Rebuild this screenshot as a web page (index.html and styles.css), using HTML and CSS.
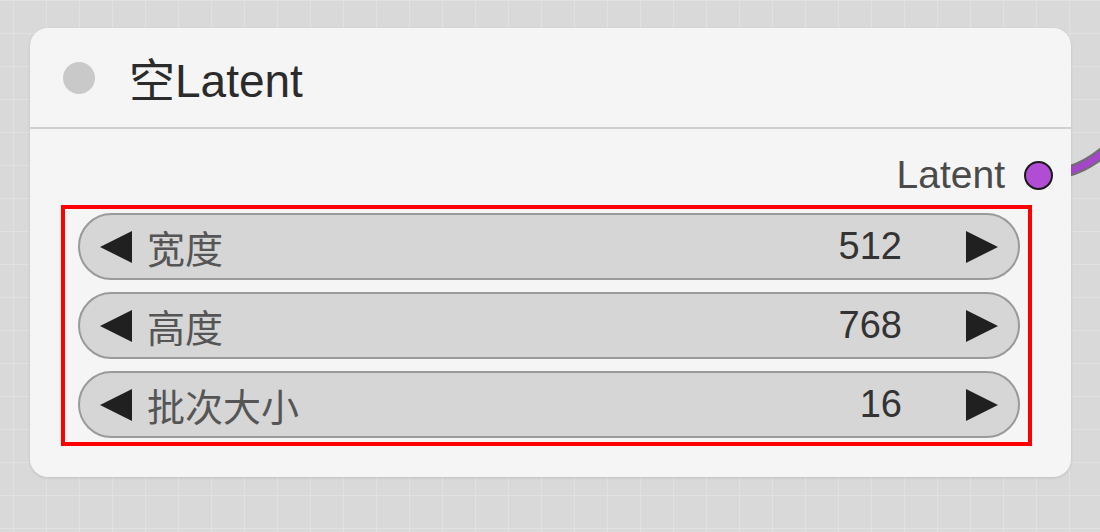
FILE: index.html
```html
<!DOCTYPE html>
<html lang="zh-CN">

<head>
    <meta charset="UTF-8">
    <meta name="viewport" content="width=device-width, initial-scale=1.0">
    <title>空Latent</title>
    <link rel="stylesheet" href="styles.css">
</head>

<body>
    <div class="canvas">
        <svg class="wire" width="40" height="60" viewBox="0 0 40 60">
            <path d="M0 44 C 12 41, 26 34, 40 22" class="wire-outline" />
            <path d="M0 44 C 12 41, 26 34, 40 22" class="wire-line" />
        </svg>

        <div class="node">
            <div class="node-header">
                <span class="node-dot"></span>
                <span class="node-title">空Latent</span>
            </div>
            <div class="node-body">
                <div class="output">
                    <span class="output-label">Latent</span>
                    <span class="output-slot"></span>
                </div>
                <div class="highlight">
                    <div class="widget">
                        <svg class="arrow" viewBox="0 0 32 32"><polygon points="0,16 32,0 32,32" /></svg>
                        <span class="widget-name">宽度</span>
                        <span class="widget-value">512</span>
                        <svg class="arrow" viewBox="0 0 32 32"><polygon points="32,16 0,0 0,32" /></svg>
                    </div>
                    <div class="widget">
                        <svg class="arrow" viewBox="0 0 32 32"><polygon points="0,16 32,0 32,32" /></svg>
                        <span class="widget-name">高度</span>
                        <span class="widget-value">768</span>
                        <svg class="arrow" viewBox="0 0 32 32"><polygon points="32,16 0,0 0,32" /></svg>
                    </div>
                    <div class="widget">
                        <svg class="arrow" viewBox="0 0 32 32"><polygon points="0,16 32,0 32,32" /></svg>
                        <span class="widget-name">批次大小</span>
                        <span class="widget-value">16</span>
                        <svg class="arrow" viewBox="0 0 32 32"><polygon points="32,16 0,0 0,32" /></svg>
                    </div>
                </div>
            </div>
        </div>
    </div>
</body>

</html>
```

FILE: styles.css
```css
body {
    margin: 0;
    font-family: "Liberation Sans", "Noto Sans CJK SC", sans-serif;
    background-color: #d9d9d9;
}

.canvas {
    position: relative;
    width: 1100px;
    height: 532px;
    overflow: hidden;
    padding: 28px 0 0 30px;
    box-sizing: border-box;
    background-color: #d9d9d9;
    background-image:
        linear-gradient(to right, #e1e1e1 1px, transparent 1px),
        linear-gradient(to bottom, #e1e1e1 1px, transparent 1px);
    background-size: 33px 33px;
    background-position: 13px 0;
}

.wire {
    position: absolute;
    left: 1066px;
    top: 128px;
}

.wire-outline {
    fill: none;
    stroke: #6f6f6f;
    stroke-width: 11;
}

.wire-line {
    fill: none;
    stroke: #a546c9;
    stroke-width: 7;
}

.node {
    position: relative;
    width: 1041px;
    height: 449px;
    background-color: #f5f5f5;
    border-radius: 18px;
    box-shadow: 0 1px 3px rgba(0, 0, 0, 0.12);
}

.node-header {
    display: flex;
    align-items: center;
    height: 99px;
    padding-left: 33px;
    border-bottom: 2px solid #cfcfcf;
}

.node-dot {
    width: 32px;
    height: 32px;
    border-radius: 50%;
    background-color: #c9c9c9;
}

.node-title {
    margin-left: 34px;
    font-size: 46px;
    color: #2b2b2b;
    padding-bottom: 2px;
}

.output {
    display: flex;
    justify-content: flex-end;
    align-items: center;
    height: 40px;
    margin-top: 26px;
    padding-right: 18px;
}

.output-label {
    font-size: 39px;
    color: #4a4a4a;
}

.output-slot {
    width: 25px;
    height: 25px;
    margin-left: 19px;
    border-radius: 50%;
    border: 2px solid #1a1a1a;
    background-color: #b04dd4;
}

.highlight {
    display: flex;
    flex-direction: column;
    gap: 12px;
    width: 971px;
    margin: 10px 0 0 31px;
    padding: 4px 8px 4px 13px;
    border: 4px solid #ff0000;
    box-sizing: border-box;
}

.widget {
    display: flex;
    align-items: center;
    height: 67px;
    padding: 0 20px;
    background-color: #d6d6d6;
    border: 2px solid #9a9a9a;
    border-radius: 34px;
    box-sizing: border-box;
}

.arrow {
    width: 32px;
    height: 32px;
    fill: #202020;
}

.widget-name {
    margin-left: 15px;
    font-size: 38px;
    color: #555555;
}

.widget-value {
    margin-left: auto;
    margin-right: 64px;
    font-size: 38px;
    color: #333333;
}
```
